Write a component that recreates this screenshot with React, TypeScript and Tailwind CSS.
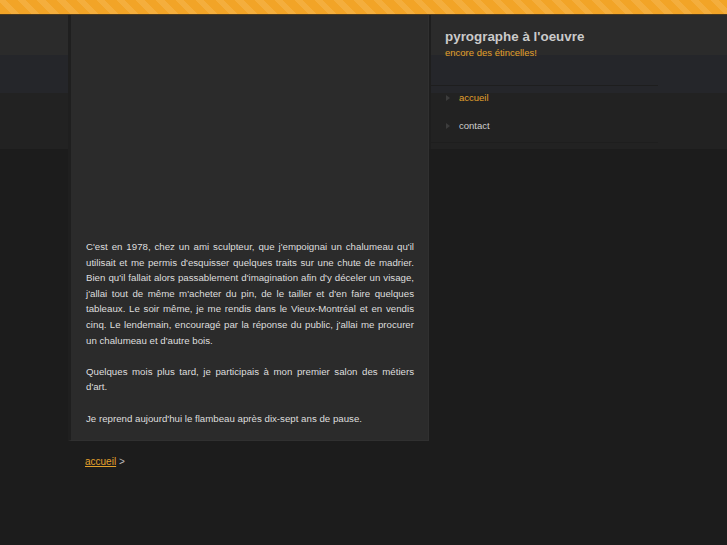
export default function App() {
  return (
    <div className="min-h-screen bg-[#1c1c1c] font-['Liberation_Sans',Arial,sans-serif]">
      {/* striped top bar */}
      <div className="h-[15px] border-b border-[#4e3a1c] bg-[#f2a427] bg-[repeating-linear-gradient(45deg,#f2a427_0px,#f2a427_8px,#f4ae3d_8px,#f4ae3d_14px)]" />

      {/* header bands + columns */}
      <div className="bg-[linear-gradient(to_bottom,#2b2b2b_0px,#2b2b2b_40px,#25262a_40px,#25262a_78px,#222222_78px,#222222_134px,#1c1c1c_134px)]">
        <div className="flex items-start pl-[68px]">
          <div className="w-[361px]">
            <div className="border-l-[3px] border-r border-b border-l-[#1f1f1f] border-r-[#303030] border-b-[#303030] bg-[#2b2b2b] pl-[15px] pr-[14px] pt-[224px] pb-[14px] text-[9.7px] leading-[15.6px] text-[#dedede] text-justify">
              <p className="mb-[15.6px]">
                C'est en 1978, chez un ami sculpteur, que j'empoignai un chalumeau qu'il utilisait et me permis
                d'esquisser quelques traits sur une chute de madrier. Bien qu'il fallait alors passablement
                d'imagination afin d'y déceler un visage, j'allai tout de même m'acheter du pin, de le tailler et
                d'en faire quelques tableaux. Le soir même, je me rendis dans le Vieux-Montréal et en vendis cinq. Le
                lendemain, encouragé par la réponse du public, j'allai me procurer un chalumeau et d'autre bois.
              </p>
              <p className="mb-[15.6px]">
                Quelques mois plus tard, je participais à mon premier salon des métiers d'art.
              </p>
              <p>Je reprend aujourd'hui le flambeau après dix-sept ans de pause.</p>
            </div>
            <div className="mt-[13px] pl-[17px] text-[10px] leading-[15px] text-[#bdbdbd]">
              <a href="#" className="text-[#e3a12c] underline">
                accueil
              </a>{" "}
              &gt;
            </div>
          </div>

          {/* sidebar */}
          <div className="h-[134px] w-[229px] border-l-2 border-[#1e1e1e]">
            <div className="h-[71px] border-b border-[#1e1e1e] pl-[14px] pt-[14px]">
              <h1 className="text-[13.4px] font-bold leading-[15px] text-[#cacaca]">pyrographe à l'oeuvre</h1>
              <p className="mt-[3px] text-[9.5px] leading-[11px] text-[#e3a12c]">encore des étincelles!</p>
            </div>
            <ul className="border-b border-[#1e1e1e] text-[9.5px]">
              <li className="flex h-[28px] items-start gap-[9px] pl-[15px] pt-[6px] leading-[12px]">
                <span className="mt-[3px] h-0 w-0 border-y-[3px] border-l-[4px] border-y-transparent border-l-[#3c3c3c]" />
                <a href="#" className="text-[#e3a12c]">accueil</a>
              </li>
              <li className="flex h-[28px] items-start gap-[9px] pl-[15px] pt-[6px] leading-[12px]">
                <span className="mt-[3px] h-0 w-0 border-y-[3px] border-l-[4px] border-y-transparent border-l-[#3c3c3c]" />
                <a href="#" className="text-[#d0d0d0]">contact</a>
              </li>
            </ul>
          </div>
        </div>
      </div>
    </div>
  );
}
